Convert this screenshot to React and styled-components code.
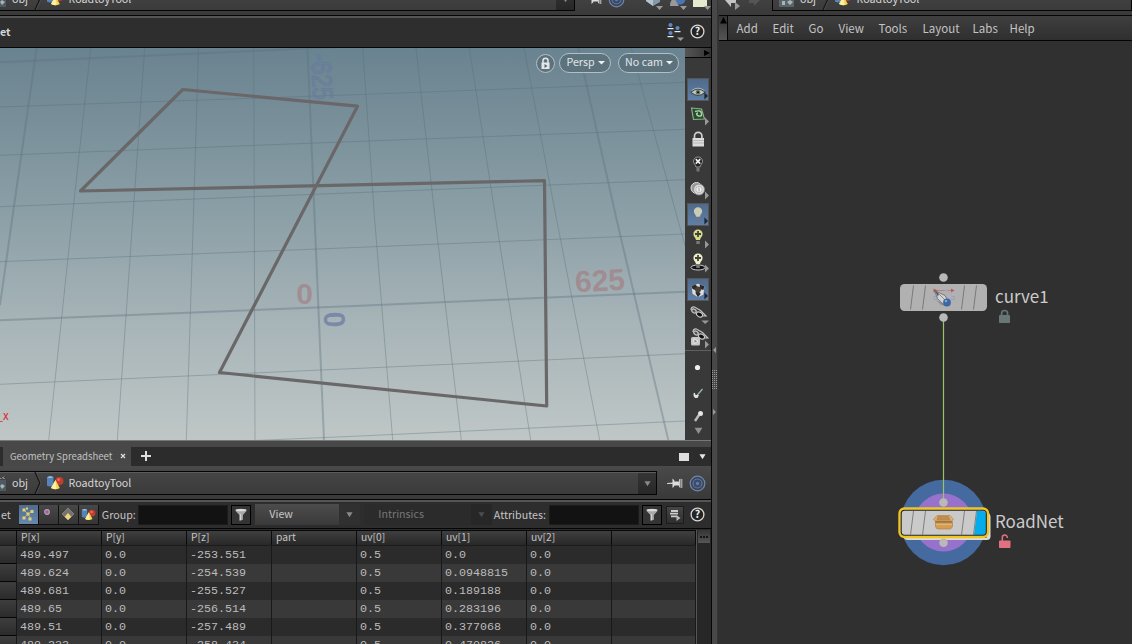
import React from "react";
import styled, { createGlobalStyle } from "styled-components";

const Global = createGlobalStyle`
  * { box-sizing: border-box; }
  body { margin: 0; background: #303030; overflow: hidden; }
  #root { width: 1132px; height: 644px; overflow: hidden; }
`;

const ui = `"Noto Sans CJK SC", "Open Sans", sans-serif`;

const Shell = styled.div`
  display: grid;
  grid-template-columns: 711px 7px 414px;
  height: 644px;
  overflow: hidden;
  font-family: ${ui};
  font-size: 10.7px;
  line-height: 14px;
  color: #c4c4c4;
  white-space: nowrap;
`;
const LeftColumn = styled.div`
  display: flex;
  flex-direction: column;
  min-width: 0;
  height: 644px;
  overflow: hidden;
`;
const RightColumn = styled(LeftColumn)`
  background: #303030;
`;
const Splitter = styled.div`
  height: 644px;
  background: #484848;
  border-left: 1px solid #060606;
  border-right: 1px solid #363636;
`;
const ClippedTop = styled.div`
  display: flex;
  flex: none;
  flex-direction: column;
  justify-content: flex-end;
  height: 15px;
  overflow: hidden;
`;
const PathRow = styled.div`
  flex: none;
  display: flex;
  height: 33px;
  padding-top: 5px;
  background: linear-gradient(#4a4a4a, #393939);
`;
const PathBar = styled.div`
  position: relative;
  display: flex;
  align-items: center;
  width: ${(p) => p.$w}px;
  height: 24px;
  border: 1px solid #050505;
  border-left-width: ${(p) => (p.$open ? "0" : "1px")};
  background: linear-gradient(#464646, #3b3b3b);
  box-shadow: inset 0 1px #5c5c5c;
  color: #d6d6d6;
`;
const Crumb = styled.span`
  margin-left: ${(p) => p.$gap || 0}px;
`;
const DropEnd = styled.div`
  display: flex;
  align-items: center;
  justify-content: center;
  width: 18px;
  height: 21px;
  margin: 1px 0 0 auto;
  background: linear-gradient(#353535, #272727);
`;
const RowIcons = styled.div`
  display: flex;
  align-items: center;
  height: 24px;
  padding-left: ${(p) => p.$pad}px;
  gap: ${(p) => p.$gap}px;
`;
const ToolHeader = styled.div`
  flex: none;
  display: flex;
  align-items: center;
  height: 33px;
  padding: 0 6px 0 0;
  border-top: 1px solid #050505;
  border-bottom: 1px solid #050505;
  background: #2e2e2e;
  box-shadow: inset 0 2px #555;
  color: #d8d8d8;
  font-weight: 700;
`;
const HeaderIcons = styled.div`
  display: flex;
  align-items: center;
  gap: 5px;
  margin-left: auto;
`;
const ViewRow = styled.div`
  flex: none;
  display: flex;
  height: 392px;
`;
const Viewport = styled.div`
  position: relative;
  width: 685px;
  height: 392px;
  background: linear-gradient(#6a8390 0%, #8b9fa6 42%, #a7b4b8 70%, #bfc7c6 100%);
  overflow: hidden;
`;
const Scene = styled.svg`
  display: block;
`;
const ViewControls = styled.div`
  position: absolute;
  top: 5px;
  right: 6px;
  display: flex;
  gap: 4px;
  align-items: center;
`;
const Pill = styled.div`
  display: flex;
  align-items: center;
  justify-content: center;
  gap: 3px;
  width: ${(p) => p.$w}px;
  height: ${(p) => p.$h || 20}px;
  margin-right: ${(p) => p.$mr || 0}px;
  padding: 0 0 ${(p) => (p.$round ? 0 : 2)}px ${(p) => (p.$round ? 0 : 1)}px;
  border: 1px solid #b2bfc4;
  border-radius: 11px;
  background: #5c727d;
  color: #e2e6e7;
`;
const ToolStrip = styled.div`
  display: flex;
  flex-direction: column;
  align-items: center;
  width: 26px;
  background: #393939;
`;
const StripHandle = styled.div`
  display: flex;
  align-items: center;
  justify-content: flex-end;
  width: 26px;
  height: 10px;
  border-bottom: 1px solid #050505;
  background: linear-gradient(90deg, #555, #333);
`;
const StripCell = styled.div`
  flex: none;
  display: flex;
  align-items: center;
  justify-content: center;
  width: 22px;
  height: ${(p) => p.$h || 24}px;
  margin-top: ${(p) => p.$mt || 0}px;
  background: ${(p) => (p.$on ? "linear-gradient(#506b8a, #5f7fa6)" : "none")};
  border: ${(p) => (p.$on ? "1px solid #33475f" : "0")};
  outline: ${(p) => (p.$on ? "1px solid #565656" : "0")};
  outline-offset: -1px;
`;
const StripRule = styled.div`
  width: 26px;
  height: 1px;
  background: #606060;
`;
const HSplit = styled.div`
  flex: none;
  height: 7px;
  background: #484848;
  border-top: 1px solid #777;
`;
const TabRow = styled.div`
  flex: none;
  display: flex;
  align-items: center;
  height: 19px;
  padding-left: 3px;
  background: #2c2c2c;
`;
const Tab = styled.div`
  display: flex;
  align-items: center;
  justify-content: space-between;
  width: 128px;
  height: 19px;
  padding: 0 5px 1px 7px;
  background: #484848;
  color: #c2c2c2;
  font-size: 9.55px;
`;
const TabIcons = styled.div`
  display: flex;
  align-items: center;
  gap: 9px;
  margin-left: auto;
  padding-right: 5px;
`;
const Filters = styled.div`
  flex: none;
  display: flex;
  align-items: center;
  height: 30px;
  border-top: 1px solid #050505;
  border-bottom: 1px solid #050505;
  box-shadow: inset 0 2px #555;
  background: #2d2d2d;
  padding-top: 1px;
`;
const ClassButton = styled.div`
  display: flex;
  align-items: center;
  justify-content: center;
  width: ${(p) => p.$w || 20}px;
  height: 20px;
  border: 1px solid #111;
  border-width: 0 1px 1px 0;
  background: ${(p) => (p.$on ? "linear-gradient(#4f6d8d, #6789ae)" : "linear-gradient(#484848, #353535)")};
`;
const Field = styled.div`
  width: 90px;
  height: 20px;
  margin: 1px 3px 0 ${(p) => p.$ml}px;
  background: #121212;
  border: 1px solid #1c1c1c;
`;
const SquareButton = styled.div`
  display: flex;
  align-items: center;
  justify-content: center;
  width: ${(p) => p.$w || 20}px;
  height: ${(p) => p.$w || 20}px;
  border: 1px solid ${(p) => (p.$soft ? "#1c1c1c" : "#000")};
  background: ${(p) => (p.$soft ? "linear-gradient(#464646, #2e2e2e)" : "#343434")};
`;
const Select = styled.div`
  display: flex;
  align-items: center;
  justify-content: space-between;
  width: ${(p) => p.$w}px;
  height: 21px;
  margin: 0 0 1px ${(p) => p.$ml}px;
  padding-left: 14px;
  background: ${(p) => (p.$off ? "#2b2b2b" : "linear-gradient(#4c4c4c, #3a3a3a)")};
  color: ${(p) => (p.$off ? "#777" : "#c8c8c8")};
`;
const SelectEnd = styled.div`
  display: flex;
  align-items: center;
  justify-content: center;
  width: ${(p) => p.$w}px;
  height: 21px;
  background: ${(p) => (p.$off ? "#272727" : "#303030")};
`;
const SheetArea = styled.div`
  display: flex;
  height: 120px;
  padding-top: 1px;
  background: #2b2b2b;
`;
const Sheet = styled.div`
  width: 696px;
`;
const columns = `17px repeat(7, 85px) 84px`;
const HeadRow = styled.div`
  display: grid;
  grid-template-columns: ${columns};
  height: 16px;
  border-top: 1px solid #070707;
  border-bottom: 1px solid #1c1c1c;
  background: linear-gradient(#3f3f3f, #282828);
`;
const HeadCell = styled.div`
  padding-left: 4px;
  border-right: 1px solid #0a0a0a;
  font-size: 10.3px;
  line-height: 12px;
`;
const DataRow = styled.div`
  display: grid;
  grid-template-columns: ${columns};
  height: 18px;
  background: ${(p) => (p.$alt ? "#393939" : "#2b2b2b")};
  font: 11.7px/19px "Liberation Mono", monospace;
  color: #bcbcbc;
`;
const DataCell = styled.div`
  height: 18px;
  padding-left: 3px;
  border-right: 1px solid #191919;
`;
const RowHead = styled.div`
  height: 18px;
  border-right: 1px solid #191919;
  border-bottom: 1px solid #050505;
  background: linear-gradient(#3e3e3e, #2b2b2b);
`;
const ScrollTrack = styled.div`
  width: 15px;
  border-left: 1px solid #555;
  background: #272727;
  padding-left: 1px;
`;
const ScrollButton = styled.div`
  display: flex;
  align-items: center;
  justify-content: center;
  width: 12px;
  height: 13px;
  background: linear-gradient(#353535, #565656);
`;
const MenuBar = styled.div`
  flex: none;
  display: flex;
  height: 26px;
  margin-left: 1px;
  border-top: 1px solid #050505;
  border-bottom: 1px solid #050505;
  background: linear-gradient(#3f3f3f, #2f2f2f);
`;
const MenuHandle = styled.div`
  display: flex;
  justify-content: center;
  width: 9px;
  padding-top: 1px;
  border-right: 1px solid #050505;
  background: linear-gradient(#333, #555);
`;
const MenuItems = styled.div`
  display: grid;
  align-items: center;
  grid-template-columns: 36px 36px 30px 40px 44px 50px 37px 50px;
  padding-left: 8.6px;
  font-size: 11.5px;
`;
const NodeCanvas = styled.div`
  position: relative;
  flex: 1;
`;
const NodeLabel = styled.div`
  position: absolute;
  left: 277px;
  top: ${(p) => p.$top}px;
  font-size: 17px;
  line-height: 24px;
  color: #cbcbcb;
`;
const Graph = styled.svg`
  position: absolute;
  left: 0;
  top: 0;
`;

const Down = ({ s = 8, c = "#8a8a8a" }) => (
  <svg width={s} height={s} viewBox="0 0 8 8"><path d="M0.5 1.5h7L4 7z" fill={c} /></svg>
);
const Caret = () => (
  <svg width="7" height="5" viewBox="0 0 7 5"><path d="M0 1h7L3.500 4.500z" fill="#f0f0f0" /></svg>
);
const Shapes = ({ s = 18 }) => (
  <svg width={s} height={s * 0.84} viewBox="0 0 18 15">
    <circle cx="13.300" cy="6" r="4.100" fill="#c43c2d" />
    <circle cx="12.600" cy="4.600" r="1.400" fill="#e87060" />
    <path d="M1 2.200q3.500-2 6.500 0v8.500q-3.500 1.600-6.500 0z" fill="#5684b8" />
    <path d="M1 2.200q3.500-2 6.500 0q-3.200 1.500-6.500 0z" fill="#9fc2e2" />
    <path d="M9.500 5l4.300 8q-4 2.500-8.800 0z" fill="#f3d650" />
    <path d="M9.500 5l1 9q-3 .5-5.500-1z" fill="#fff0a0" />
  </svg>
);
const ObjIcon = () => (
  <svg width="17" height="17" viewBox="0 0 17 17">
    <rect x="1" y="4" width="15" height="12" fill="#59636a" />
    <path d="M1 4l14-3v3z" fill="#999" />
    <path d="M3 3l2 1M8 2l2 1M13 1l1 2" stroke="#222" strokeWidth="1.500" />
    <path d="M4 10h3v4H4zM9 11l3-2 3 2-3 3z" fill="#a9b4ba" />
  </svg>
);
const Chevron = () => (
  <svg width="9" height="22" viewBox="0 0 9 22"><path d="M2 0l5 11-5 11" fill="none" stroke="#151515" strokeWidth="1.300" /><path d="M3 0l5 11-5 11" fill="none" stroke="#5a5a5a" strokeWidth=".6" /></svg>
);
const Pin = () => (
  <svg width="16" height="13" viewBox="0 0 16 13">
    <path d="M0 6l6-.6v1.600L0 7z" fill="#ccc" />
    <path d="M5.500 1.500l1.800 1.800v6L5.500 11zM7 4.500h5v4H7z" fill="#ddd" />
    <path d="M12 2.500l1.500-1v9.500L12 10zM14.300 2h1v9h-1z" fill="#c8c8c8" />
  </svg>
);
const Target = () => (
  <svg width="17" height="17" viewBox="0 0 17 17" fill="none">
    <circle cx="8.500" cy="8.500" r="7.300" stroke="#7187b0" strokeWidth="1.200" fill="#3a4456" />
    <circle cx="8.500" cy="8.500" r="4.500" stroke="#62779f" strokeWidth="1.200" fill="#3d4a62" />
    <circle cx="8.500" cy="8.500" r="1.700" fill="#4c7ec8" />
  </svg>
);
const Help = () => (
  <svg width="15" height="15" viewBox="0 0 15 15">
    <circle cx="7.500" cy="7.500" r="6.400" fill="#242424" stroke="#d8d8d8" strokeWidth="1.300" />
    <text x="7.500" y="11.400" fontSize="10.500" fontWeight="700" textAnchor="middle" fill="#eee" fontFamily={ui}>?</text>
  </svg>
);
const Funnel = () => (
  <svg width="12" height="14" viewBox="0 0 12 14">
    <path d="M.5 1.500q5.500-1.500 11 0v1.500L7.900 7v4.800L4.500 13V7L.5 3z" fill="#a8a8a8" />
    <ellipse cx="6" cy="2.200" rx="5" ry="1.100" fill="#dcdcdc" />
    <path d="M5.300 6v6" stroke="#dedede" />
  </svg>
);
const Nodes = () => (
  <svg width="19" height="19" viewBox="0 0 19 19">
    {[[4.5, 3], [11.5, 6], [4.5, 11]].map(([x, y]) => (
      <g key={x + "-" + y}>
        <path d={`M${x - 3} ${y + 4.2}v-1.2h6v1.2z`} fill="#e6edf5" />
        <circle cx={x} cy={y} r="2.1" fill="#5b87c4" />
      </g>
    ))}
    <path d="M11 15.500h7L14.500 19z" fill="#999" />
  </svg>
);

const Corner = ({ dark, down }) =>
  down ? <path d="M14.500 18.500H22L18.200 22z" fill="#999" /> : <path d="M18 14.500l4 4-4 4z" fill={dark ? "#1e2631" : "#999"} />;
const Ico = ({ children, dark, corner = true, down }) => (
  <svg width="22" height="24" viewBox="0 0 22 24">{children}{corner && <Corner dark={dark} down={down} />}</svg>
);
const Bulb = ({ fill, plus }) => (
  <g>
    <path d="M11 3.500a4.500 4.500 0 0 1 4.600 4.500c0 2.500-2.200 3.400-2.600 6H9c-.5-2.600-2.600-3.500-2.600-6A4.500 4.500 0 0 1 11 3.500z" fill={fill} />
    <path d="M9.300 15h3.500v3H9.300z" fill="#777" />
    {plus && <path d="M11 5v6M8 8h6" stroke="#44443a" strokeWidth="1.800" />}
  </g>
);
const Glasses = () => (
  <g fill="none" stroke="#c4c4c4" strokeWidth="1.200">
    <path d="M4 8q0-3.500 3.500-3l6 3.500 5.500 5.500h-3" />
    <ellipse cx="7" cy="9" rx="2.400" ry="1.700" fill="#555" transform="rotate(35 7 9)" />
    <ellipse cx="12.500" cy="12.500" rx="3.300" ry="2.200" fill="#0c0c0c" transform="rotate(30 12.500 12.500)" />
  </g>
);

function Breadcrumb({ width }) {
  return (
    <PathBar $w={width} $open>
      <svg width="7" height="17" viewBox="10 0 7 17"><path d="M10 3l5-2v3h-5z" fill="#888" /><path d="M11 2.500l1.500 1M14 1.500l1 1.500" stroke="#222" /><rect x="10" y="5" width="6" height="11" fill="#4e5a61" /><path d="M10 11l2-2 3 2-3 3z" fill="#a9b4ba" /></svg>
      <Crumb $gap={5}>obj</Crumb>
      <svg width="18" height="22" viewBox="0 0 18 22"><path d="M7 0l5 11-5 11" fill="none" stroke="#111" strokeWidth="1.300" /><path d="M8 0l5 11-5 11" fill="none" stroke="#595959" strokeWidth=".7" /></svg>
      <Shapes />
      <Crumb $gap={4.5}>RoadtoyTool</Crumb>
      <DropEnd><Down s={7} c="#888" /></DropEnd>
    </PathBar>
  );
}

const rows = [
  ["489.497", "0.0", "-253.551", "", "0.5", "0.0", "0.0"],
  ["489.624", "0.0", "-254.539", "", "0.5", "0.0948815", "0.0"],
  ["489.681", "0.0", "-255.527", "", "0.5", "0.189188", "0.0"],
  ["489.65", "0.0", "-256.514", "", "0.5", "0.283196", "0.0"],
  ["489.51", "0.0", "-257.489", "", "0.5", "0.377068", "0.0"],
  ["489.232", "0.0", "-258.434", "", "0.5", "0.470826", "0.0"],
];
const heads = ["P[x]", "P[y]", "P[z]", "part", "uv[0]", "uv[1]", "uv[2]"];

const minor = [
  "90.7,48 72,220 48.7,440", "144.7,48 132.7,220 117.3,440", "198.5,48 193.3,220 186.3,440",
  "253.7,48 254.3,220 255,440", "362.7,48 374.7,220 392.7,440", "416,48 435.3,220 461.3,440",
  "469.3,48 496,220 530.7,440", "524,48 556.7,220 599.7,440", "631,48 677,216.7 686,249",
  "0,107 360,94.5 685,82.3", "0,155.3 360,141.3 685,129.3", "0,206.7 360,192.5 685,179.7",
  "0,261.7 360,247.3 685,234", "0,384.3 360,368.3 685,353.7", "255,440.5 360,436 685,421",
];
const major = [
  "36.7,48 12,220 0,305", "307.5,48 314.7,220 324,440", "578.3,48 616.7,220 668.3,440",
  "0,62.3 198,53.5 340,47", "0,320.3 360,305.7 685,291.7",
];

function ViewScene() {
  return (
    <Scene width="685" height="392" viewBox="0 48 685 392">
      <g fill="none" stroke="#536c77" strokeOpacity=".36" strokeWidth="1">
        {minor.map((p) => <polyline key={p} points={p} />)}
      </g>
      <g fill="none" stroke="#5b707e" strokeOpacity=".38" strokeWidth="2">
        {major.map((p) => <polyline key={p} points={p} />)}
      </g>
      <g fontFamily='"Liberation Sans", sans-serif' fontWeight="700" fontSize="30">
        <text x="304.700" y="303.500" textAnchor="middle" fill="#a27b80" fillOpacity=".65">0</text>
        <text transform="translate(600.5 291) rotate(-3)" textAnchor="middle" fill="#a27b80" fillOpacity=".65">625</text>
        <text transform="translate(324 320) rotate(88) scale(.95 1)" textAnchor="middle" fill="#6f7ea5" fillOpacity=".8">0</text>
        <text transform="translate(311 54) rotate(87) scale(.83 1)" fontSize="28" fontWeight="400" fill="#6f83a0" fillOpacity=".3" stroke="#637a9e" strokeOpacity=".6" strokeWidth="1.500">-625</text>
      </g>
      <path d="M182.700 89.500L357.500 106.200L219.500 372.500L546.700 406L544.500 180.700L80.500 191z" fill="none" stroke="#6a6768" strokeWidth="3.200" strokeLinejoin="round" />
      <text x="-3.500" y="419.500" fontSize="11.500" fill="#e0242c" fontFamily={ui}>_x</text>
    </Scene>
  );
}

function NodeGraph() {
  return (
    <Graph width="414" height="603" viewBox="718 41 414 603">
      <circle cx="943.500" cy="522.500" r="42.800" fill="#456a9f" />
      <circle cx="943.500" cy="522.500" r="29" fill="#9672cc" />
      <path d="M943.500 318V502" stroke="#98c468" strokeWidth="1.200" />
      <g fill="#b9b9b9">
        <circle cx="943.500" cy="277.500" r="4.300" /><circle cx="943.500" cy="317.500" r="4.300" />
        <circle cx="943.500" cy="502.500" r="4.300" />
      </g>
      <rect x="900" y="284" width="87" height="27" rx="4.500" fill="#b1b1b1" />
      <path d="M913.500 285.500l-3 24M925.500 285.500l-3 24M964.500 285.500l-3 24M976.500 285.500l-3 24" stroke="#7a7a7a" strokeWidth="1" />
      <g>
        <path d="M935 290.500h18" stroke="#c08080" strokeWidth="1" />
        <path d="M933.500 288.500l4 2-4 2zM951 288.500l3.500 2-3.500 2z" fill="#b85a5a" />
        <rect x="934" y="296.500" width="3" height="3" fill="none" stroke="#8fa0c0" strokeWidth=".8" />
        <rect x="951.500" y="296.500" width="3" height="3" fill="none" stroke="#8fa0c0" strokeWidth=".8" />
        <path d="M944 289.500q8 3 8 10" fill="none" stroke="#a5afc8" />
        <path d="M936 300l5 5 7 1-6-3z" fill="#777" opacity=".55" />
        <path d="M934.500 290.500l10.500 5 4 7-4.500 3-7-7z" fill="#d3d3d3" stroke="#666" strokeWidth=".8" />
        <path d="M934.500 290.500l4.500 3-1 3z" fill="#555" />
        <path d="M938 293l7 7" stroke="#8a8a8a" />
        <circle cx="947" cy="302.500" r="3.900" fill="#3c67a5" /><circle cx="946" cy="301" r="1.300" fill="#81a6d4" />
      </g>
      <path d="M904 538h82.500v-26q4 1 4 5v19.500q0 3.500-4 3.500h-77q-5 0-5.500-2z" fill="#dcdcd8" />
      <circle cx="943.500" cy="542.800" r="4.300" fill="#b9b9b9" />
      <rect x="899.500" y="508.500" width="88.500" height="28.500" rx="5" fill="#cacaca" stroke="#f2c61c" strokeWidth="2.400" />
      <path d="M977 511h5.500q3.500 0 3.500 4v16q0 4-3.500 4H974z" fill="#05acec" />
      <rect x="901.200" y="510.200" width="85.100" height="25.100" rx="3.500" fill="none" stroke="#242424" strokeWidth="1.100" />
      <path d="M913.500 511l-3 24M925.500 511l-3 24M964.500 511l-3 24M976.500 511l-3 24" stroke="#808080" strokeWidth="1" />
      <g stroke="#a87c42" strokeWidth=".6">
        <path d="M937 515.500h13l3.500 4-2 1.500h-16l-2-1.500z" fill="#e2b06e" />
        <path d="M935.500 522.500h17v4q-1 2.500-3 2.500h-11q-2.500 0-3-2.500z" fill="#d69c50" />
        <path d="M938 516.500h10.500l1.500 3.300h-13z" fill="#c08d4c" />
        <path d="M936 524.500h16" stroke="#f0ca90" />
        <path d="M935 521.800h17.500" stroke="#8a6230" strokeWidth="1.100" />
      </g>
      <g fill="#687775">
        <rect x="999" y="315" width="11" height="8" rx=".8" />
        <path d="M1001.600 315v-1.500a3 3 0 0 1 6 0v1.500" fill="none" stroke="#687775" strokeWidth="1.600" />
      </g>
      <g fill="#e2717f">
        <rect x="999" y="540.500" width="11.500" height="7.500" rx=".8" />
        <path d="M1002.300 541v-3.500a2.500 2.500 0 0 1 5 0v.5" fill="none" stroke="#e2717f" strokeWidth="1.500" />
      </g>
    </Graph>
  );
}

const SplitMarks = () => (
  <svg width="5" height="644" viewBox="0 0 5 644">
    <path d="M4 347v6l-3-3zM1 409v6l3-3z" fill="#999" />
    {Array.from({ length: 10 }, (_, i) => <path key={i} d={`M0 ${370.5 + i * 2}h1m1 0h1m1 0h1`} stroke="#999" />)}
  </svg>
);

export default function App() {
  return (
    <>
      <Global />
      <Shell>
        <LeftColumn>
          <ClippedTop>
            <PathRow>
              <Breadcrumb width={575} />
              <RowIcons $pad={11} $gap={6}>
                <Pin /><Target /><svg width="6" height="24" />
                <svg width="20" height="24" viewBox="0 0 20 24"><path d="M3 7l8-4 6 4v8l-7 4-7-5z" fill="#8199aa" /><path d="M3 7l7 3v9l-7-5z" fill="#b5c3cc" /><path d="M13 19h7l-3.500 4z" fill="#999" /></svg>
              </RowIcons>
              <RowIcons $pad={4} $gap={4}>
                <svg width="20" height="24" viewBox="0 0 20 24"><circle cx="13" cy="12" r="5.500" fill="#4a75b0" /><path d="M3 19q0-6 4-8l5 8z" fill="#999" /><circle cx="7" cy="10" r="3" fill="#a59688" /><path d="M13 19h7l-3.500 4z" fill="#999" /></svg>
                <svg width="20" height="24" viewBox="0 0 20 24"><rect x="2" y="5" width="14" height="15" fill="#e8ead0" /><path d="M13 19h7l-3.500 4z" fill="#999" /></svg>
              </RowIcons>
            </PathRow>
          </ClippedTop>
          <ToolHeader>
            <span>et</span>
            <HeaderIcons><Nodes /><Help /></HeaderIcons>
          </ToolHeader>
          <ViewRow>
            <Viewport>
              <ViewScene />
              <ViewControls>
                <Pill $w={19} $h={19} $round>
                  <svg width="11" height="13" viewBox="0 0 11 13"><path d="M3 6V3.800a2.500 2.500 0 0 1 5 0V6" fill="none" stroke="#e4e7e8" strokeWidth="1.500" /><rect x="1.500" y="5.500" width="8" height="6.500" fill="#e4e7e8" /><path d="M4.500 7l3 2-3 2z" fill="#536872" /></svg>
                </Pill>
                <Pill $w={52} $mr={3}>Persp<Caret /></Pill>
                <Pill $w={61}>No cam<Caret /></Pill>
              </ViewControls>
            </Viewport>
            <ToolStrip>
              <StripHandle><svg width="8" height="8" viewBox="0 0 8 8"><path d="M1 1l6 3-6 3z" fill="#000" /></svg></StripHandle>
              <StripCell $mt={20} $h={23} $on>
                <Ico dark><path d="M3 14.500q8-7 16 0q-8 7-16 0z" fill="#a9b3a8" stroke="#333b3d" /><path d="M5 14.500q6-4.500 12 0q-6 4.500-12 0z" fill="#c8ccba" /><circle cx="11" cy="14.500" r="2.500" fill="#64756b" /><circle cx="11" cy="14.500" r="1.100" fill="#111" /><path d="M4 12.500q7-5 14 0" fill="none" stroke="#ccc" strokeWidth=".8" /></Ico>
              </StripCell>
              <StripCell $mt={2}>
                <Ico><path d="M4.500 5l10 1 3 10-11 .5z" fill="#2a4a2e" stroke="#8ab18c" strokeWidth="1.200" /><path d="M8 8.500q6-2 6.500 2t-4 2q-2-2 .5-2.500" fill="none" stroke="#a8d8a8" strokeWidth="1.400" /></Ico>
              </StripCell>
              <StripCell>
                <Ico corner={false}><path d="M7.500 12V9a3.700 3.700 0 0 1 7.400 0v3" fill="none" stroke="#cfcfcf" strokeWidth="1.700" /><rect x="5.500" y="11" width="11.500" height="8.500" fill="#dcdcdc" /><path d="M5.500 13.500h11.500M5.500 16h11.500" stroke="#aaa" strokeWidth=".7" /></Ico>
              </StripCell>
              <StripCell $mt={1}>
                <Ico corner={false}><path d="M11 5a4.400 4.400 0 0 1 4.500 4.300c0 2.400-2 3-2.500 5.700H9c-.5-2.700-2.500-3.300-2.500-5.700A4.400 4.400 0 0 1 11 5z" fill="#222" stroke="#999" /><path d="M8.800 7.200l4.400 4.400m0-4.400l-4.400 4.400" stroke="#eee" strokeWidth="1.700" /><path d="M9.500 16h3v3.500h-3z" fill="#777" /></Ico>
              </StripCell>
              <StripCell $mt={1}>
                <Ico><circle cx="9.500" cy="11" r="5.500" fill="#999" stroke="#ddd" /><circle cx="12" cy="12.500" r="5.500" fill="#d6d6d6" stroke="#888" strokeWidth=".8" /><circle cx="12" cy="12.500" r="3.200" fill="#eee" stroke="#bbb" /><path d="M12 10.500v4" stroke="#aaa" strokeWidth="1.200" /></Ico>
              </StripCell>
              <StripCell $mt={2} $h={23} $on><Ico dark><Bulb fill="#c9cbb5" /></Ico></StripCell>
              <StripCell><Ico><Bulb fill="#d5dc8a" plus /></Ico></StripCell>
              <StripCell><Ico><ellipse cx="11" cy="17.500" rx="7" ry="2.500" fill="#111" stroke="#ccc" /><Bulb fill="#edf0ca" plus /></Ico></StripCell>
              <StripCell $mt={4} $h={23} $on>
                <Ico dark><path d="M4 8l7-3 7 3-1 9-6 3-6-4z" fill="#ddd" /><path d="M4 8l4-2 3 3-3 3-3-1zM13 6l5 2-1 4-4-1zM8 15l3-2 3 3-3 4z" fill="#2a2a2a" /><circle cx="11" cy="11.500" r="3.300" fill="#4a3f3c" /></Ico>
              </StripCell>
              <StripCell $mt={1}><Ico down><Glasses /></Ico></StripCell>
              <StripCell>
                <Ico><g transform="translate(2 -2)"><Glasses /></g><rect x="4" y="11" width="9" height="8.500" rx="1.500" fill="#c7c7c7" /><path d="M7 12.800l4 2.400-4 2.400z" fill="#888" stroke="#f4f4f4" strokeWidth=".8" /></Ico>
              </StripCell>
              <StripRule />
              <StripCell $mt={5}><Ico corner={false}><circle cx="10.500" cy="11.500" r="2.600" fill="#eee" /></Ico></StripCell>
              <StripCell $mt={1}><Ico corner={false}><path d="M9.500 15l6-7" stroke="#9eb2b5" strokeWidth="1.300" /><path d="M6.500 12.500q1.500-2 2 1.500l3.500 0-1.500 3H8q-2-1.500-1.500-4.500z" fill="#e0e0e0" /></Ico></StripCell>
              <StripCell $h={21}><Ico corner={false}><path d="M8 17l4-6" stroke="#bdbdbd" strokeWidth="2.400" /><circle cx="13.500" cy="9.500" r="2.500" fill="#e5e5e5" /></Ico></StripCell>
              <Down s={9} c="#909090" />
            </ToolStrip>
          </ViewRow>
          <HSplit>
            <svg width="711" height="6" viewBox="0 0 711 6">
              <path d="M288 4.500h5l-2.500-3.500zM350 1.500h5L352.500 5z" fill="#a0a0a0" />
              <path d="M313 1.500h20M313 3.500h20" stroke="#aaa" strokeDasharray="1 1" />
            </svg>
          </HSplit>
          <TabRow>
            <Tab><span>Geometry Spreadsheet</span><svg width="6" height="6" viewBox="0 0 6 6"><path d="M1 1l4 4m0-4L1 5" stroke="#ddd" strokeWidth="1.200" /></svg></Tab>
            <svg width="30" height="19" viewBox="0 0 30 19"><path d="M15 4v10M10 9h10" stroke="#dedede" strokeWidth="2" /></svg>
            <TabIcons>
              <svg width="11" height="8" viewBox="0 0 11 8"><rect width="10" height="8" fill="#dedede" /></svg>
              <Down s={7} c="#e6e6e6" />
            </TabIcons>
          </TabRow>
          <PathRow>
            <Breadcrumb width={657} />
            <RowIcons $pad={10} $gap={6}><Pin /><Target /></RowIcons>
          </PathRow>
          <Filters>
            <Crumb $gap={1}>et</Crumb>
            <svg width="8" height="20" />
            <ClassButton $on $w={20}>
              <svg width="14" height="14" viewBox="0 0 14 14"><path d="M3 3l4 4-4 4M7 7l4-3M7 7l3 5" stroke="#b8a864" fill="none" /><path d="M1.500 1.500h3v3h-3zM5.500 5.500h3v3h-3zM9.500 3h3v3h-3zM1.500 9.500h3v3h-3zM7.500 10.500h3v3h-3zM5 .5h2v2H5z" fill="#e6cf75" /></svg>
            </ClassButton>
            <ClassButton><svg width="14" height="14" viewBox="0 0 14 14"><circle cx="6" cy="5" r="2.300" fill="#8f678d" stroke="#c799c5" strokeWidth="1.200" /></svg></ClassButton>
            <ClassButton><svg width="14" height="14" viewBox="0 0 14 14"><path d="M7 1l6 6-6 6-6-6z" fill="#77736a" stroke="#999" strokeWidth=".6" /><path d="M7 6l3.300 3.700L7 13 3.700 9.700z" fill="#edd382" /></svg></ClassButton>
            <ClassButton><Shapes s={15} /></ClassButton>
            <Crumb $gap={3}>Group:</Crumb>
            <Field $ml={2.5} />
            <SquareButton><Funnel /></SquareButton>
            <Select $w={105} $ml={4}>View<SelectEnd $w={21}><Down s={7} /></SelectEnd></Select>
            <Select $w={128} $ml={4} $off>Intrinsics<SelectEnd $w={21} $off><Down s={7} c="#4c4c4c" /></SelectEnd></Select>
            <Crumb $gap={1.5}>Attributes:</Crumb>
            <Field $ml={3} />
            <SquareButton><Funnel /></SquareButton>
            <svg width="4" height="20" />
            <SquareButton $w={18} $soft>
              <svg width="12" height="12" viewBox="0 0 12 12"><path d="M2 2h7M1 4.700h8M2 7.400h6" stroke="#ccc" strokeWidth="1.800" /><path d="M7.500 6l4 3-4 3z" fill="#bbb" /></svg>
            </SquareButton>
            <svg width="6" height="20" />
            <Help />
          </Filters>
          <SheetArea>
            <Sheet>
              <HeadRow>
                <HeadCell />
                {heads.map((h) => <HeadCell key={h}>{h}</HeadCell>)}
                <HeadCell />
              </HeadRow>
              {rows.map((r, i) => (
                <DataRow key={i} $alt={i % 2 === 1}>
                  <RowHead />
                  {r.map((c, j) => <DataCell key={j}>{c}</DataCell>)}
                  <DataCell />
                </DataRow>
              ))}
            </Sheet>
            <ScrollTrack>
              <ScrollButton><svg width="8" height="2" viewBox="0 0 8 2"><path d="M0 1h2m1 0h2m1 0h2" stroke="#050505" strokeWidth="1.500" /></svg></ScrollButton>
            </ScrollTrack>
          </SheetArea>
        </LeftColumn>
        <Splitter><SplitMarks /></Splitter>
        <RightColumn>
          <ClippedTop>
            <PathRow>
              <RowIcons $pad={7} $gap={7}>
                <svg width="16" height="22" viewBox="0 0 16 22"><path d="M0 12l6-6v4h5v5H6v4z" fill="#c4c4c4" /><path d="M10 14l5 4-5 4z" fill="#999" /></svg>
                <svg width="24" height="22" viewBox="0 0 24 22"><path d="M12 12l-6-5v3H1v5h5v3z" fill="#555" /></svg>
              </RowIcons>
              <PathBar $w={370}>
                <svg width="5" height="17" /><ObjIcon />
                <Crumb $gap={5}>obj</Crumb>
                <svg width="5" height="22" /><Chevron /><svg width="4" height="22" />
                <Shapes />
                <Crumb $gap={4.5}>RoadtoyTool</Crumb>
              </PathBar>
            </PathRow>
          </ClippedTop>
          <MenuBar>
            <MenuHandle><svg width="7" height="7" viewBox="0 0 7 7"><path d="M3.500 0L7 6.500H0z" fill="#000" /></svg></MenuHandle>
            <MenuItems>
              {["Add", "Edit", "Go", "View", "Tools", "Layout", "Labs", "Help"].map((m) => <span key={m}>{m}</span>)}
            </MenuItems>
          </MenuBar>
          <NodeCanvas>
            <NodeGraph />
            <NodeLabel $top={243}>curve1</NodeLabel>
            <NodeLabel $top={468}>RoadNet</NodeLabel>
          </NodeCanvas>
        </RightColumn>
      </Shell>
    </>
  );
}
